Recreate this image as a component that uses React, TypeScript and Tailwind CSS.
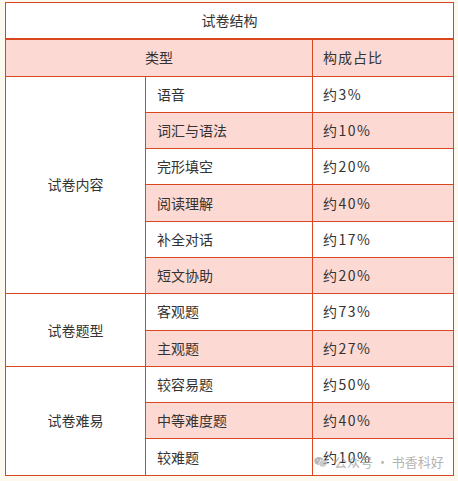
import React from "react";

const groups = [
  {
    name: "试卷内容",
    items: [
      ["语音", "约3%"],
      ["词汇与语法", "约10%"],
      ["完形填空", "约20%"],
      ["阅读理解", "约40%"],
      ["补全对话", "约17%"],
      ["短文协助", "约20%"],
    ],
  },
  {
    name: "试卷题型",
    items: [
      ["客观题", "约73%"],
      ["主观题", "约27%"],
    ],
  },
  {
    name: "试卷难易",
    items: [
      ["较容易题", "约50%"],
      ["中等难度题", "约40%"],
      ["较难题", "约10%"],
    ],
  },
];

export default function App() {
  return (
    <div
      className="w-[458px] h-[481px] bg-[#fef9ef] pt-[2px] pl-[5px] relative text-[#333] text-[14px]"
      style={{ fontFamily: '"Noto Sans CJK SC", "Noto Sans", sans-serif' }}
    >
      <table className="table-fixed border-collapse w-[448px]">
        <colgroup>
          <col className="w-[140px]" />
          <col className="w-[167px]" />
          <col className="w-[141px]" />
        </colgroup>
        <tbody>
          <tr className="h-[36px] bg-white">
            <td colSpan={3} className="border border-[#d8471f] border-b-2 text-center">
              试卷结构
            </td>
          </tr>
          <tr className="h-[37.5px] bg-[#fdd9d3]">
            <td colSpan={2} className="border border-[#d8471f] text-center">
              类型
            </td>
            <td className="border border-[#d8471f] pl-[10px] tracking-[1px]">构成占比</td>
          </tr>
          {groups.map((g) =>
            g.items.map((it, i) => {
              const pink = i % 2 === 1;
              return (
                <tr key={g.name + i} className="h-[36.3px]">
                  {i === 0 && (
                    <td
                      rowSpan={g.items.length}
                      className="border border-[#d8471f] bg-white text-center"
                    >
                      {g.name}
                    </td>
                  )}
                  <td
                    className={`border border-[#d8471f] pl-[11px] ${pink ? "bg-[#fdd9d3]" : "bg-white"}`}
                  >
                    {it[0]}
                  </td>
                  <td
                    className={`border border-[#d8471f] pl-[10px] tracking-[1.5px] ${pink ? "bg-[#fdd9d3]" : "bg-white"}`}
                  >
                    {it[1]}
                  </td>
                </tr>
              );
            })
          )}
        </tbody>
      </table>
      <div className="absolute left-[314px] top-[452px] flex items-center gap-[7px] text-[13px] text-[#a0a0a0]/80">
        <svg width="13" height="12" viewBox="0 0 26 22" className="opacity-70">
          <ellipse cx="10" cy="9" rx="9.5" ry="8" fill="#9a9a9a" />
          <ellipse cx="17.5" cy="14" rx="8" ry="6.8" fill="#b5b5b5" stroke="#fff" strokeWidth="1" />
          <circle cx="7" cy="7" r="1.2" fill="#fff" />
          <circle cx="13" cy="7" r="1.2" fill="#fff" />
        </svg>
        <span>公众号 · 书香科好</span>
      </div>
    </div>
  );
}
